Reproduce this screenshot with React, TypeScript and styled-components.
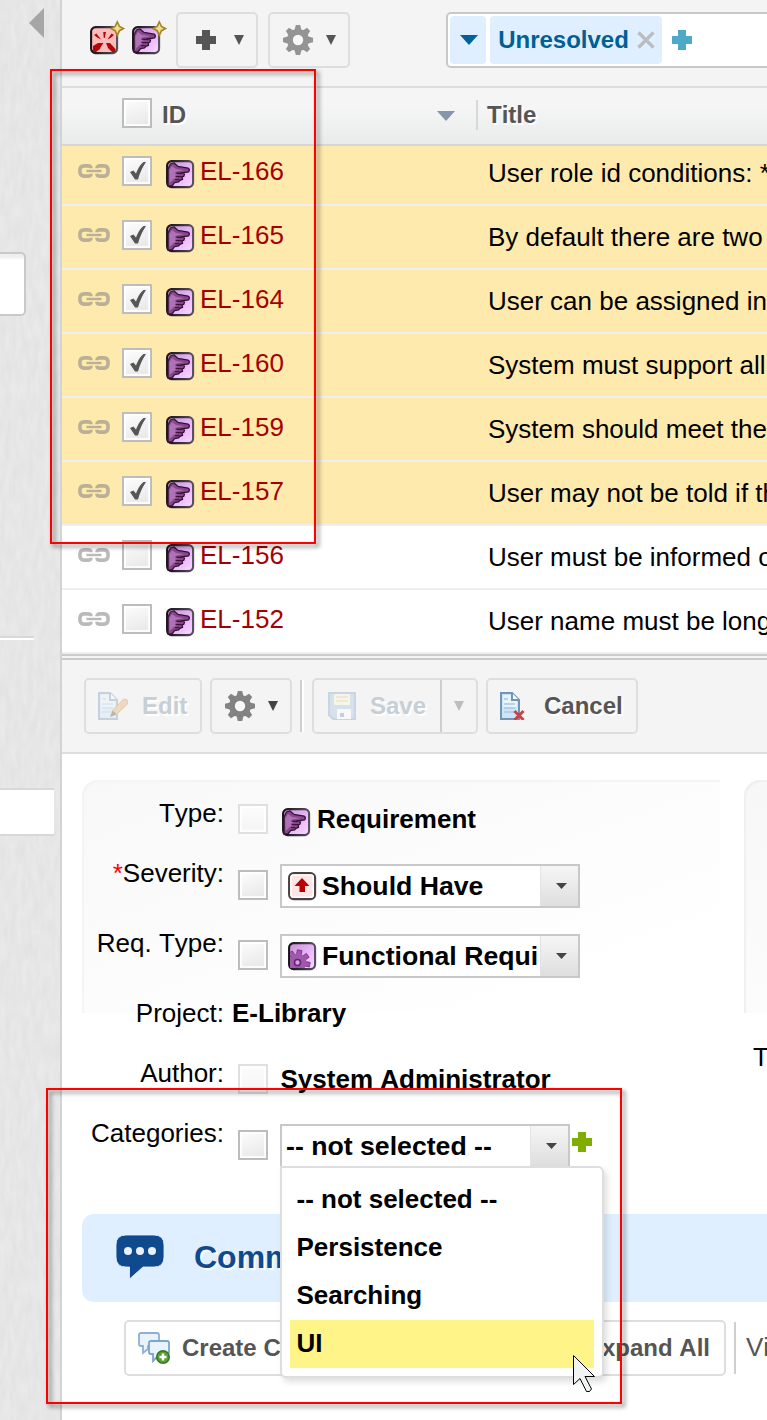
import React from 'react';
import styled, { createGlobalStyle } from 'styled-components';

const Global = createGlobalStyle`
  *, *::before, *::after { box-sizing: border-box; }
  body {
    margin: 0;
    background: #fff;
    font-family: "Liberation Sans", Arial, sans-serif;
    font-size: 26px;
    font-kerning: none;
    color: #000;
    overflow: hidden;
  }
  svg { display: block; flex: none; }
`;

const Page = styled.div`
  position: relative;
  display: flex;
  width: 767px;
  height: 1420px;
  overflow: hidden;
`;

/* ---------- sidebar ---------- */

const Sidebar = styled.aside`
  position: relative;
  flex: none;
  width: 62px;
  border-right: 2px solid #d3d3d3;
  background: #e9e9e9;
  display: flex;
  flex-direction: column;
  align-items: flex-start;
`;

const Grain = styled.svg`
  position: absolute;
  inset: 0;
  width: 60px;
  height: 1420px;
`;

const CollapseArrow = styled.svg`
  position: relative;
  margin: 8px 0 0 29px;
`;

const SideField = styled.div`
  position: relative;
  width: 26px;
  height: 64px;
  margin-top: 214px;
  border: 2px solid #c9c9c9;
  border-left: 0;
  border-radius: 0 5px 5px 0;
  background: linear-gradient(#efefef 0 3px, #fff 6px);
`;

const SideRule = styled.div`
  position: relative;
  width: 34px;
  height: 4px;
  margin-top: 320px;
  background: #fff;
  border-top: 2px solid #d8d8d8;
`;

const SideItem = styled.div`
  position: relative;
  width: 54px;
  height: 48px;
  margin-top: 148px;
  background: #fff;
  border: solid #d8d8d8;
  border-width: 2px 0;
`;

/* ---------- toolbars ---------- */

const Main = styled.main`
  flex: 1;
  min-width: 0;
  overflow: hidden;
`;

const TopBar = styled.div`
  display: flex;
  align-items: flex-start;
  height: 88px;
  padding: 12px 0 0 28px;
  background: #f4f4f4;
  border-bottom: 2px solid #ddd;
`;

const NewItem = styled.div`
  margin: 9px 10px 0 0;
  width: 32px;
`;

const Button = styled.div<{
  $w?: number;
  $gap?: number;
  $pad?: number;
  $left?: number;
  $off?: boolean;
  $plain?: boolean;
}>`
  display: flex;
  align-items: center;
  flex: none;
  height: 56px;
  width: ${p => (p.$w ? p.$w + 'px' : 'auto')};
  margin-left: ${p => p.$left ?? 0}px;
  padding: 0 ${p => p.$pad ?? 12}px;
  gap: ${p => p.$gap ?? 14}px;
  border: 2px solid #dedede;
  border-radius: 5px;
  background: ${p => (p.$plain ? '#fff' : '#f4f4f4')};
  font-size: 24px;
  font-weight: bold;
  line-height: 52px;
  white-space: nowrap;
  color: ${p => (p.$off ? '#c6cfd6' : '#555')};
  text-shadow: 2px 2px 1px #fff;
`;

const ButtonGroup = styled.div`
  display: flex;
  gap: 10px;
  margin-left: 2px;
`;

const Filter = styled.div`
  display: flex;
  align-items: center;
  flex: none;
  gap: 4px;
  width: 400px;
  height: 56px;
  margin-left: 96px;
  padding-left: 2px;
  background: #fff;
  border: 2px solid #c8c8c8;
  border-radius: 5px;
`;

const Chip = styled.div<{ $w: number }>`
  display: flex;
  align-items: center;
  justify-content: center;
  gap: 8px;
  width: ${p => p.$w}px;
  height: 48px;
  padding-left: 1px;
  border-radius: 4px;
  background: #e0efff;
  color: #005f95;
  font-size: 24px;
  font-weight: bold;
`;

const AddFilter = styled.div`
  margin-left: 6px;
`;

const EditBar = styled.div`
  display: flex;
  align-items: flex-start;
  height: 94px;
  padding: 18px 0 0 22px;
  background: #f4f4f4;
  border-bottom: 2px solid #ddd;
`;

const Divider = styled.div<{ $m: string }>`
  flex: none;
  width: 2px;
  height: 52px;
  margin: ${p => p.$m};
  background: #cfcfcf;
  box-shadow: 2px 0 0 #fff;
`;

const SplitArrow = styled.div`
  display: flex;
  align-items: center;
  justify-content: center;
  flex: none;
  height: 52px;
  width: 36px;
  margin: 0 -14px 0 auto;
  border-left: 2px solid #cfcfcf;
`;

/* ---------- table ---------- */

const HeadRow = styled.div`
  display: flex;
  align-items: center;
  height: 58px;
  padding: 0 0 6px 60px;
  font-size: 24px;
  font-weight: bold;
  color: #555;
  text-shadow: 2px 2px 1px #fff;
  background: linear-gradient(#f5f5f5 0%, #f5f5f5 35%, #e9ebeb 100%);
  border-bottom: 2px solid #d3d7d7;
`;

const HeadId = styled.div`
  width: 285px;
  padding: 3px 0 0 10px;
`;

const SortArrow = styled.div`
  margin-top: 6px;
`;

const HeadTitle = styled.div`
  margin: 4px 0 0 21px;
  padding-left: 9px;
  border-left: 2px solid #d6d8da;
  height: 30px;
  line-height: 29px;
`;

const List = styled.div`
  height: 508px;
  overflow: hidden;
  display: flex;
  flex-direction: column;
  justify-content: flex-end;
`;

const Row = styled.div<{ $on: boolean }>`
  display: flex;
  align-items: flex-start;
  flex: none;
  height: 64px;
  background: ${p => (p.$on ? '#ffeaae' : '#fff')};
  border-bottom: 2px solid #efefef;
`;

const IdCell = styled.div`
  display: flex;
  align-items: center;
  flex: none;
  width: 425px;
  height: 58px;
  padding-left: 16px;
`;

const RowCheck = styled.div`
  margin: 0 14px 0 12px;
`;

const KindIcon = styled.div`
  margin: 6px 6px 0 0;
`;

const IdLink = styled.span`
  color: #a50000;
`;

const TitleCell = styled.div`
  line-height: 62px;
  margin-left: 1px;
  white-space: nowrap;
`;

const Splitter = styled.div`
  height: 6px;
  background: #f4f4f4;
  border: solid #cbcbcb;
  border-width: 2px 0;
`;

const Box = styled.div<{ $off?: boolean }>`
  flex: none;
  width: 30px;
  height: 30px;
  border: 2px solid ${p => (p.$off ? '#e0e0e0' : '#bdbdbd')};
  background: ${p => (p.$off ? 'linear-gradient(#fcfcfc, #f5f5f5)' : 'linear-gradient(160deg, #fdfdfd, #e6e6e6)')};
  box-shadow: inset 0 0 0 2px rgba(255, 255, 255, 0.85);
`;

/* ---------- details form ---------- */

const Details = styled.section`
  display: flex;
  gap: 24px;
  height: 460px;
  padding: 26px 0 0 20px;
`;

const Panel = styled.div<{ $w: number; $side?: boolean }>`
  flex: none;
  width: ${p => p.$w}px;
  height: 233px;
  padding-top: 18px;
  border-radius: 16px 0 0 0;
  background: ${p =>
    p.$side
      ? 'linear-gradient(#f7f7f7, #fcfcfc)'
      : 'linear-gradient(160deg, #f8f8f8 0%, #fcfcfc 50%, #fff 85%)'};
  box-shadow: inset 2px 2px 1px ${p => (p.$side ? '#f0f0f0' : '#f4f4f4')};
`;

const Field = styled.div<{ $h: number }>`
  display: flex;
  align-items: flex-start;
  height: ${p => p.$h}px;
`;

const Label = styled.div`
  flex: none;
  width: 142px;
  line-height: 30px;
  text-align: right;
  white-space: nowrap;
`;

const Star = styled.span`
  color: #f00;
`;

const Value = styled.div<{ $h: number; $l?: number }>`
  display: flex;
  align-items: center;
  height: ${p => p.$h}px;
  margin-left: ${p => p.$l ?? 14}px;
  font-weight: bold;
  white-space: nowrap;
`;

const FieldCheck = styled.div<{ $up?: boolean; $gap?: number }>`
  margin: 0 ${p => p.$gap ?? 12}px ${p => (p.$up ? 2 : 0)}px 0;
`;

const TypeIcon = styled.div`
  margin: 6px 7px 0 2px;
`;

const Select = styled.div<{ $w: number }>`
  display: flex;
  flex: none;
  width: ${p => p.$w}px;
  height: 44px;
  background: #fff;
  border: 2px solid #c8c8c8;
  font-size: 26.66px;
`;

const SelectText = styled.div<{ $pad: number }>`
  display: flex;
  align-items: center;
  gap: 6px;
  flex: 1;
  min-width: 0;
  overflow: hidden;
  padding-left: ${p => p.$pad}px;
`;

const SelectButton = styled.div`
  flex: none;
  display: flex;
  align-items: center;
  justify-content: center;
  width: 38px;
  padding-left: 3px;
  border-left: 1px solid #e3e3e3;
  background: linear-gradient(#f6f6f6, #dedede);
`;

const AddCategory = styled.div`
  margin: 0 0 8px 2px;
`;

const SideText = styled.div`
  padding-left: 9px;
  margin-top: 244px;
  line-height: 30px;
  white-space: nowrap;
`;

const Anchor = styled.div`
  position: relative;
`;

const Menu = styled.div`
  position: absolute;
  z-index: 5;
  top: 42px;
  left: 0;
  width: 324px;
  height: 212px;
  padding: 8px;
  background: #fff;
  border: 2px solid #dedede;
  border-radius: 0 6px 6px 6px;
  box-shadow: 3px 4px 6px rgba(0, 0, 0, 0.13);
`;

const Option = styled.div<{ $on?: boolean }>`
  height: 48px;
  padding-left: 6.5px;
  line-height: 46px;
  background: ${p => (p.$on ? '#fff487' : 'transparent')};
`;

/* ---------- comments ---------- */

const CommentHead = styled.div`
  display: flex;
  align-items: center;
  height: 88px;
  margin-left: 20px;
  padding: 0 0 2px 33px;
  gap: 29px;
  border-radius: 12px 0 0 12px;
  background: #e0efff;
  color: #0f4a8e;
  font-size: 32px;
  font-weight: bold;
  text-shadow: 2px 2px 1px #fff;
`;

const Actions = styled.div`
  display: flex;
  margin: 18px 0 0 62px;
  color: #555;
  white-space: nowrap;
`;

const ActionButtons = styled.div`
  display: flex;
  justify-content: space-between;
  flex: none;
  width: 602px;
`;

const ViewText = styled.div`
  padding-left: 10px;
  line-height: 54px;
`;

/* ---------- annotations ---------- */

const Mark = styled.div<{ $x: number; $y: number; $w: number; $h: number }>`
  position: absolute;
  z-index: 10;
  left: ${p => p.$x}px;
  top: ${p => p.$y}px;
  width: ${p => p.$w}px;
  height: ${p => p.$h}px;
  border: 2px solid #f00;
  filter: drop-shadow(3px 3px 2px rgba(0, 0, 0, 0.5));
  pointer-events: none;
`;

const Pointer = styled.svg`
  position: absolute;
  z-index: 11;
  left: 572px;
  top: 1354px;
`;

/* ---------- icons ---------- */

const Tri = ({ w, h, c }: { w: number; h: number; c: string }) => (
  <svg width={w} height={h} viewBox={`0 0 ${w} ${h}`}>
    <path d={`M0 0H${w}L${w / 2} ${h}Z`} fill={c} />
  </svg>
);

const Plus = ({ c }: { c: string }) => (
  <svg width="20" height="20" viewBox="0 0 20 20">
    <path d="M6 0h8v6h6v8h-6v6H6v-6H0V6h6z" fill={c} />
  </svg>
);

const Gear = ({ c }: { c: string }) => (
  <svg width="30" height="30" viewBox="-15 -15 30 30">
    {[0, 45, 90, 135].map(a => (
      <path key={a} d="M-3.4 -10L-2.2 -15H2.2L3.4 -10V10L2.2 15H-2.2L-3.4 10Z" fill={c} transform={`rotate(${a})`} />
    ))}
    <circle r="11" fill={c} />
    <circle r="5.2" fill="#f8f8f8" />
  </svg>
);

const Hand = () => (
  <>
    <path
      d="M2 9L4.5 4L8 3L12 6.5L22 8Q24.5 9.8 22.5 12L16 12.8L18.5 14L17.8 16.3L16.2 17L16.5 19.3L14 20.3L12.5 22L8.5 22.5L6 26L2 26Z"
      fill="#8a4790"
      stroke="#31142f"
      strokeWidth="1.3"
    />
    <path d="M3.2 10.5L6 6L10 9L18 10.2L10 11.4L12 14L9 15.5L11 18L8 18.5L3.6 23Z" fill="#b072b6" />
    <path d="M9.5 13.2L16 13.5M9.5 16.6H16M9 19.6L13.5 19.6" stroke="#3c173a" strokeWidth="1.3" fill="none" />
  </>
);

const Spark = () => (
  <path
    d="M27.3 -4L29.5 0.5L33.4 2.6L29.5 4.7L27.3 9.2L25.1 4.7L21.2 2.6L25.1 0.5Z"
    fill="#f3df86"
    stroke="#a3862a"
    strokeWidth="1.7"
  />
);

const tileFill = { hand: 'url(#lilac)', gear: 'url(#lilac)', burst: '#ffbcbc', up: '#ffe6e6' };

const Tile = ({ kind, spark }: { kind: 'hand' | 'burst' | 'gear' | 'up'; spark?: boolean }) => (
  <svg
    width={spark ? 36 : 28}
    height={spark ? 33 : 28}
    viewBox={spark ? '0 -5 36 33' : '0 0 28 28'}
    overflow="visible"
  >
    <defs>
      <linearGradient id="lilac" x1="0" y1="0" x2="1" y2="1">
        <stop offset="0" stopColor="#c98fd9" />
        <stop offset="0.65" stopColor="#efbcff" />
        <stop offset="1" stopColor="#f6dcff" />
      </linearGradient>
      <linearGradient id="edge" x1="0" y1="0" x2="1" y2="0">
        <stop offset="0" stopColor="#161216" />
        <stop offset="1" stopColor="#55505a" />
      </linearGradient>
    </defs>
    <rect
      x="1.1"
      y="1.1"
      width="26"
      height="26"
      rx="4.5"
      fill={tileFill[kind]}
      stroke={kind === 'up' ? '#4a4242' : 'url(#edge)'}
      strokeWidth="2.1"
    />
    {kind === 'hand' && <Hand />}
    {kind === 'up' && (
      <>
        <rect x="3" y="3" width="22.2" height="22.2" rx="2.5" fill="none" stroke="#fff" strokeWidth="1.5" />
        <path d="M14 6L21.5 14H17V20H11.5V14H6.5Z" fill="#b80000" />
      </>
    )}
    {kind === 'burst' && (
      <path
        d="M13.2 6H16L14.8 12H13.8ZM4 9L6.5 7.5L11 13.5L8 12ZM24 9L21.5 7.5L17.5 13.5L20.5 12ZM3 20L8 17H13.5L11 20.5L10 23L6 26H3ZM16 17L20 17L25.5 23V26H22L18 22Z"
        fill="#b40808"
      />
    )}
    {kind === 'gear' && (
      <g transform="translate(9.5 20.5)">
        <clipPath id="tileClip">
          <rect x="-7.3" y="-18" width="24" height="23.5" />
        </clipPath>
        <g clipPath="url(#tileClip)" fill="#a058ae" stroke="#74307f" strokeWidth="0.8">
          {[0, 45, 90, 135].map(a => (
            <rect key={a} x="-2.3" y="-12.5" width="4.6" height="25" transform={`rotate(${a + 10})`} />
          ))}
          <circle r="9" stroke="none" />
          <circle r="3" fill="#d6a0e2" stroke="#66246f" strokeWidth="1.6" />
        </g>
      </g>
    )}
    {spark && <Spark />}
  </svg>
);

const Chain = () => (
  <svg width="32" height="14" viewBox="0 0 32 14">
    <g fill="none" stroke="rgba(130,130,130,0.55)" strokeWidth="3.6">
      <path d="M13 4.2V4Q13 1.9 10 1.9H6Q1.9 1.9 1.9 7T6 12.1H10Q13 12.1 13 10V9.8" />
      <path d="M19 4.2V4Q19 1.9 22 1.9H26Q30.1 1.9 30.1 7T26 12.1H22Q19 12.1 19 10V9.8" />
      <path d="M8.5 7H23.5" strokeWidth="2.4" />
    </g>
  </svg>
);

const Tick = () => (
  <svg width="26" height="26" viewBox="0 0 26 26">
    <path d="M6 14L9.5 12.5L12 15.5Q15 7.5 19.5 4H22Q16.5 12 14 21.5H11Z" fill="#555" />
  </svg>
);

const Cross = () => (
  <svg width="18" height="18" viewBox="0 0 18 18">
    <path d="M1.5 1.5L16.5 16.5M16.5 1.5L1.5 16.5" stroke="#b9bdc0" strokeWidth="3.2" />
  </svg>
);

const DocBase = () => (
  <>
    <path d="M1 1H12L19 8V27H1Z" fill="#cfe4f7" stroke="#7096b5" strokeWidth="2" />
    <path d="M3 3H11V9H17V15H3Z" fill="#fff" opacity="0.55" />
    <path d="M12 1V8H19" fill="#fff" stroke="#7096b5" strokeWidth="2" />
    <path d="M4 7H8M4 12H15M4 16H15M4 20H15" stroke="#a9c8e4" strokeWidth="1.5" />
  </>
);

const EditIcon = () => (
  <svg width="30" height="28" viewBox="0 0 30 28" opacity="0.35">
    <DocBase />
    <path d="M14.5 18.5L24.5 8Q27 6 29 8Q31 10 29 12.5L18.5 22.5Z" fill="#eda353" stroke="#b57a3a" strokeWidth="1" />
    <path d="M14.5 18.5L18.5 22.5L12 25Z" fill="#4b3c30" />
  </svg>
);

const CancelIcon = () => (
  <svg width="26" height="28" viewBox="0 0 26 28">
    <DocBase />
    <path d="M14.5 19L23.5 28M23.5 19L14.5 28" stroke="#c94444" strokeWidth="3" />
  </svg>
);

const SaveIcon = () => (
  <svg width="28" height="28" viewBox="0 0 28 28" opacity="0.38">
    <path d="M1 1H27V27H5L1 23Z" fill="#a5c4de" stroke="#86a5c1" strokeWidth="2" />
    <rect x="6" y="2" width="16" height="11" fill="#fdf8dc" />
    <path d="M8 5H20M8 9H20" stroke="#d8cf90" strokeWidth="1.4" />
    <path d="M9 17H23V27H9Z" fill="#fff" />
    <rect x="12" y="21" width="4" height="4" fill="#7596b4" />
  </svg>
);

const BubbleIcon = () => (
  <svg width="50" height="46" viewBox="0 0 50 46">
    <path
      d="M11 1H39Q49 1 49 11V23Q49 33 39 33H28L14.5 45V33H11Q1 33 1 23V11Q1 1 11 1Z"
      fill="#0f4a8e"
      stroke="#eaf4ff"
      strokeWidth="0.8"
    />
    <circle cx="13" cy="17" r="4" fill="#e8f1fb" />
    <circle cx="25" cy="17" r="4" fill="#e8f1fb" />
    <circle cx="37" cy="17" r="4" fill="#e8f1fb" />
  </svg>
);

const CreateIcon = () => (
  <svg width="32" height="32" viewBox="0 0 32 32">
    <path d="M3 1H19Q21 1 21 3V12Q21 14 19 14H10V17L5 21V14H3Q1 14 1 12V3Q1 1 3 1Z" fill="#eaf3fc" stroke="#8db0d6" strokeWidth="1.8" />
    <path d="M13 9H29Q31 9 31 11V20Q31 22 29 22H22L15 29V22H13Q11 22 11 20V11Q11 9 13 9Z" fill="#e9f3fd" stroke="#7ba4d2" strokeWidth="1.8" />
    <circle cx="25" cy="25" r="6.3" fill="#5a9f35" stroke="#377320" strokeWidth="1.4" />
    <path d="M25 21.5V28.5M21.5 25H28.5" stroke="#fff" strokeWidth="2.4" />
  </svg>
);

const rows = [
  { id: 'EL-166', title: 'User role id conditions: * must', on: true },
  { id: 'EL-165', title: 'By default there are two roles', on: true },
  { id: 'EL-164', title: 'User can be assigned into roles', on: true },
  { id: 'EL-160', title: 'System must support all roles', on: true },
  { id: 'EL-159', title: 'System should meet the needs', on: true },
  { id: 'EL-157', title: 'User may not be told if the', on: true },
  { id: 'EL-156', title: 'User must be informed of', on: false },
  { id: 'EL-152', title: 'User name must be longer', on: false },
];

export default function App() {
  return (
    <Page>
      <Global />
      <Sidebar>
        <Grain>
          <filter id="grain">
            <feTurbulence type="fractalNoise" baseFrequency="0.18 0.05" numOctaves="2" />
            <feColorMatrix values="0 0 0 0 0  0 0 0 0 0  0 0 0 0 0  0.08 0 0 0 -0.018" />
          </filter>
          <rect width="60" height="1420" filter="url(#grain)" opacity="0.6" />
        </Grain>
        <CollapseArrow width="15" height="30" viewBox="0 0 15 30">
          <path d="M15 0V30L0 15Z" fill="#a6a6a6" />
        </CollapseArrow>
        <SideField />
        <SideRule />
        <SideItem />
      </Sidebar>

      <Main>
        <TopBar>
          <NewItem><Tile kind="burst" spark /></NewItem>
          <NewItem><Tile kind="hand" spark /></NewItem>
          <ButtonGroup>
            <Button $w={82} $pad={18} $gap={18}>
              <Plus c="#555" />
              <Tri w={10} h={10} c="#555" />
            </Button>
            <Button $w={82} $pad={13} $gap={13}>
              <Gear c="#949494" />
              <Tri w={10} h={10} c="#555" />
            </Button>
          </ButtonGroup>
          <Filter>
            <Chip $w={36}><Tri w={18} h={10} c="#00629b" /></Chip>
            <Chip $w={172}>Unresolved<Cross /></Chip>
            <AddFilter><Plus c="#4fa8c8" /></AddFilter>
          </Filter>
        </TopBar>

        <HeadRow>
          <Box />
          <HeadId>ID</HeadId>
          <SortArrow><Tri w={18} h={10} c="#8496a8" /></SortArrow>
          <HeadTitle>Title</HeadTitle>
        </HeadRow>

        <List>
          {rows.map(r => (
            <Row key={r.id} $on={r.on}>
              <IdCell>
                <Chain />
                <RowCheck><Box>{r.on && <Tick />}</Box></RowCheck>
                <KindIcon><Tile kind="hand" /></KindIcon>
                <IdLink>{r.id}</IdLink>
              </IdCell>
              <TitleCell>{r.title}</TitleCell>
            </Row>
          ))}
        </List>
        <Splitter />

        <EditBar>
          <Button $w={118} $gap={14} $off><EditIcon />Edit</Button>
          <Button $w={82} $pad={13} $gap={13} $left={8}>
            <Gear c="#838383" />
            <Tri w={10} h={10} c="#444" />
          </Button>
          <Divider $m="2px 10px 0 8px" />
          <Button $w={166} $gap={14} $pad={14} $off>
            <SaveIcon />Save
            <SplitArrow><Tri w={10} h={10} c="#bdbdbd" /></SplitArrow>
          </Button>
          <Button $w={152} $gap={18} $left={8}><CancelIcon />Cancel</Button>
        </EditBar>

        <Details>
          <Panel $w={638}>
            <Field $h={60}>
              <Label>Type:</Label>
              <Value $h={42}>
                <FieldCheck><Box $off /></FieldCheck>
                <TypeIcon><Tile kind="hand" /></TypeIcon>
                Requirement
              </Value>
            </Field>
            <Field $h={70}>
              <Label><Star>*</Star>Severity:</Label>
              <Value $h={56}>
                <FieldCheck $up><Box /></FieldCheck>
                <Select $w={300}>
                  <SelectText $pad={6}><Tile kind="up" />Should Have</SelectText>
                  <SelectButton><Tri w={11} h={6} c="#444" /></SelectButton>
                </Select>
              </Value>
            </Field>
            <Field $h={70}>
              <Label>Req. Type:</Label>
              <Value $h={56}>
                <FieldCheck $up><Box /></FieldCheck>
                <Select $w={300}>
                  <SelectText $pad={6}><Tile kind="gear" />Functional Requi</SelectText>
                  <SelectButton><Tri w={11} h={6} c="#444" /></SelectButton>
                </Select>
              </Value>
            </Field>
            <Field $h={60}>
              <Label>Project:</Label>
              <Value $h={30} $l={8}>E-Library</Value>
            </Field>
            <Field $h={60}>
              <Label>Author:</Label>
              <Value $h={42}>
                <FieldCheck $gap={12.5}><Box $off /></FieldCheck>
                System Administrator
              </Value>
            </Field>
            <Field $h={60}>
              <Label>Categories:</Label>
              <Value $h={56}>
                <FieldCheck $up><Box /></FieldCheck>
                <Anchor>
                  <Select $w={290}>
                    <SelectText $pad={4}>-- not selected --</SelectText>
                    <SelectButton><Tri w={11} h={6} c="#444" /></SelectButton>
                  </Select>
                  <Menu>
                    <Option>-- not selected --</Option>
                    <Option>Persistence</Option>
                    <Option>Searching</Option>
                    <Option $on>UI</Option>
                  </Menu>
                </Anchor>
                <AddCategory><Plus c="#7fae00" /></AddCategory>
              </Value>
            </Field>
          </Panel>
          <Panel $w={200} $side>
            <SideText>Time</SideText>
          </Panel>
        </Details>

        <CommentHead><BubbleIcon />Comments</CommentHead>

        <Actions>
          <ActionButtons>
            <Button $plain $gap={12}><CreateIcon />Create Comment</Button>
            <Button $plain $pad={14}>Expand All</Button>
          </ActionButtons>
          <Divider $m="2px 0 0 8px" />
          <ViewText>View</ViewText>
        </Actions>
      </Main>

      <Mark $x={50} $y={69} $w={266} $h={475} />
      <Mark $x={46} $y={1088} $w={576} $h={316} />
      <Pointer width="24" height="40" viewBox="0 0 24 40">
        <path
          d="M1.5 1.5V30.5L8 24.5L14.5 37.5H17.5L19.5 35L13 22.5H22.5Z"
          fill="#f2f4f4"
          stroke="#000"
          strokeWidth="1"
        />
      </Pointer>
    </Page>
  );
}
